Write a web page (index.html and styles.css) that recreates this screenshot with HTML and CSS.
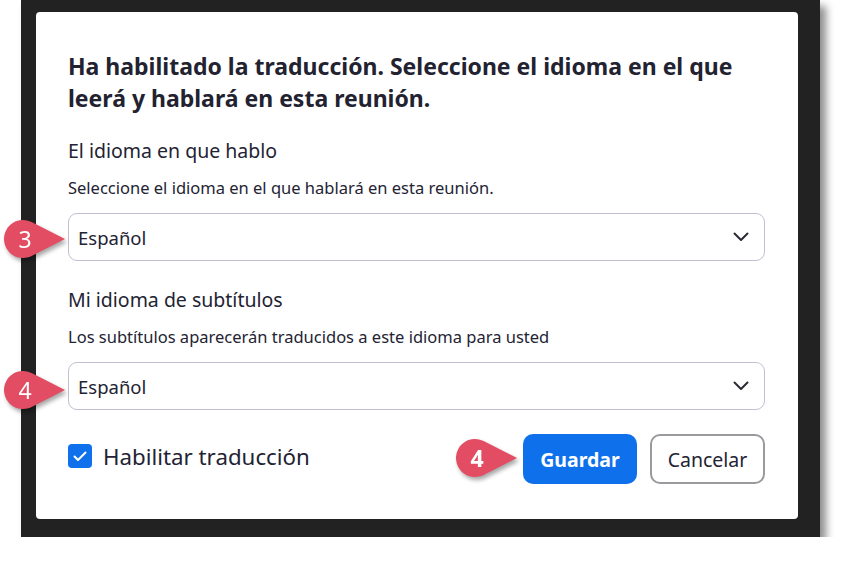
FILE: index.html
```html
<!DOCTYPE html>
<html lang="es">
<head>
<meta charset="utf-8">
<title>Traducción</title>
<link rel="stylesheet" href="styles.css">
</head>
<body>
<div class="frame">
  <div class="dialog">
    <h1 class="title">Ha habilitado la traducción. Seleccione el idioma en el que leerá y hablará en esta reunión.</h1>

    <section class="field field-first">
      <h2 class="label">El idioma en que hablo</h2>
      <p class="hint">Seleccione el idioma en el que hablará en esta reunión.</p>
      <div class="select">
        <span class="select-value">Español</span>
        <svg class="chevron" width="16" height="10" viewBox="0 0 16 10"><path d="M1.5 1.5 L8 8 L14.5 1.5" fill="none" stroke="#2b2b36" stroke-width="2" stroke-linecap="round" stroke-linejoin="round"/></svg>
        <svg class="badge badge-a" width="64" height="44" viewBox="0 0 64 44"><path d="M62 20 L28.6 3.05 A19 19 0 1 0 28.6 36.95 Z" fill="#e24d63"/><text x="22" y="28.5" text-anchor="middle" class="badge-num">3</text></svg>
      </div>
    </section>

    <section class="field field-second">
      <h2 class="label">Mi idioma de subtítulos</h2>
      <p class="hint">Los subtítulos aparecerán traducidos a este idioma para usted</p>
      <div class="select">
        <span class="select-value">Español</span>
        <svg class="chevron" width="16" height="10" viewBox="0 0 16 10"><path d="M1.5 1.5 L8 8 L14.5 1.5" fill="none" stroke="#2b2b36" stroke-width="2" stroke-linecap="round" stroke-linejoin="round"/></svg>
        <svg class="badge badge-b" width="64" height="44" viewBox="0 0 64 44"><path d="M62 20 L28.6 3.05 A19 19 0 1 0 28.6 36.95 Z" fill="#e24d63"/><text x="22" y="28.5" text-anchor="middle" class="badge-num">4</text></svg>
      </div>
    </section>

    <footer class="footer">
      <label class="check">
        <span class="check-box"><svg width="14" height="11" viewBox="0 0 14 11"><path d="M1.5 5.5 L5 9 L12.5 1.5" fill="none" stroke="#fff" stroke-width="2" stroke-linecap="round" stroke-linejoin="round"/></svg></span>
        <span class="check-label">Habilitar traducción</span>
      </label>
      <div class="actions">
        <button class="btn btn-primary">Guardar
          <svg class="badge badge-c" width="64" height="44" viewBox="0 0 64 44"><path d="M62 20 L28.6 3.05 A19 19 0 1 0 28.6 36.95 Z" fill="#e24d63"/><text x="22" y="28.5" text-anchor="middle" class="badge-num">4</text></svg>
        </button>
        <button class="btn btn-secondary">Cancelar</button>
      </div>
    </footer>
  </div>
</div>
</body>
</html>
```

FILE: styles.css
```css
html, body {
  margin: 0;
  padding: 0;
  background: #ffffff;
}

body {
  font-family: "Noto Sans", "Open Sans", "Liberation Sans", sans-serif;
  color: #232333;
}

.frame {
  margin-left: 21px;
  width: 762px;
  padding: 12px 22px 18px 15px;
  background: #222222;
  box-shadow: 6px 6px 8px rgba(0, 0, 0, 0.45);
}

.dialog {
  background: #ffffff;
  border-radius: 4px;
  height: 507px;
  box-sizing: border-box;
  padding: 38px 33px 0 32px;
  display: flex;
  flex-direction: column;
}

.title {
  margin: 0;
  font-size: 23px;
  line-height: 32px;
  font-weight: 700;
  color: #222230;
}

.field {
  display: flex;
  flex-direction: column;
}

.field-first {
  margin-top: 24px;
}

.field-second {
  margin-top: 26px;
}

.label {
  margin: 0;
  font-size: 19.5px;
  line-height: 26px;
  font-weight: 400;
  color: #232333;
}

.hint {
  margin: 13px 0 14px;
  font-size: 16.5px;
  line-height: 22px;
  color: #232333;
}

.select {
  position: relative;
  height: 48px;
  box-sizing: border-box;
  border: 1.5px solid #c2bfd3;
  border-radius: 9px;
  display: flex;
  align-items: center;
  justify-content: space-between;
  padding: 0 15px 0 9px;
}

.select-value {
  font-size: 18.5px;
  color: #232333;
}

.chevron {
  display: block;
}

.badge {
  position: absolute;
  filter: drop-shadow(2px 3px 2px rgba(0, 0, 0, 0.35));
  overflow: visible;
}

.badge-num {
  font-family: "Noto Sans", "Open Sans", sans-serif;
  font-size: 23px;
  fill: #ffffff;
}

.badge-a {
  left: -66px;
  top: 5px;
}

.badge-b {
  left: -66px;
  top: 7px;
}

.badge-c {
  left: -68px;
  top: 4px;
}

.footer {
  margin-top: 24px;
  display: flex;
  align-items: center;
  justify-content: space-between;
}

.check {
  display: flex;
  align-items: center;
  gap: 11px;
  margin-top: -6px;
}

.check-box {
  width: 24px;
  height: 24px;
  border-radius: 4px;
  background: #0e71eb;
  display: flex;
  align-items: center;
  justify-content: center;
}

.check-label {
  font-size: 22.3px;
  color: #232333;
}

.actions {
  display: flex;
  gap: 13px;
}

.btn {
  position: relative;
  height: 50px;
  width: 114px;
  box-sizing: border-box;
  font-family: "Noto Sans", "Open Sans", sans-serif;
  font-size: 19.5px;
  border-radius: 10px;
  cursor: pointer;
}

.btn-primary {
  background: #0e71eb;
  border: none;
  color: #ffffff;
  font-weight: 700;
}

.btn-secondary {
  width: 115px;
  background: #ffffff;
  border: 2px solid #9a9a9e;
  color: #232333;
}
```
